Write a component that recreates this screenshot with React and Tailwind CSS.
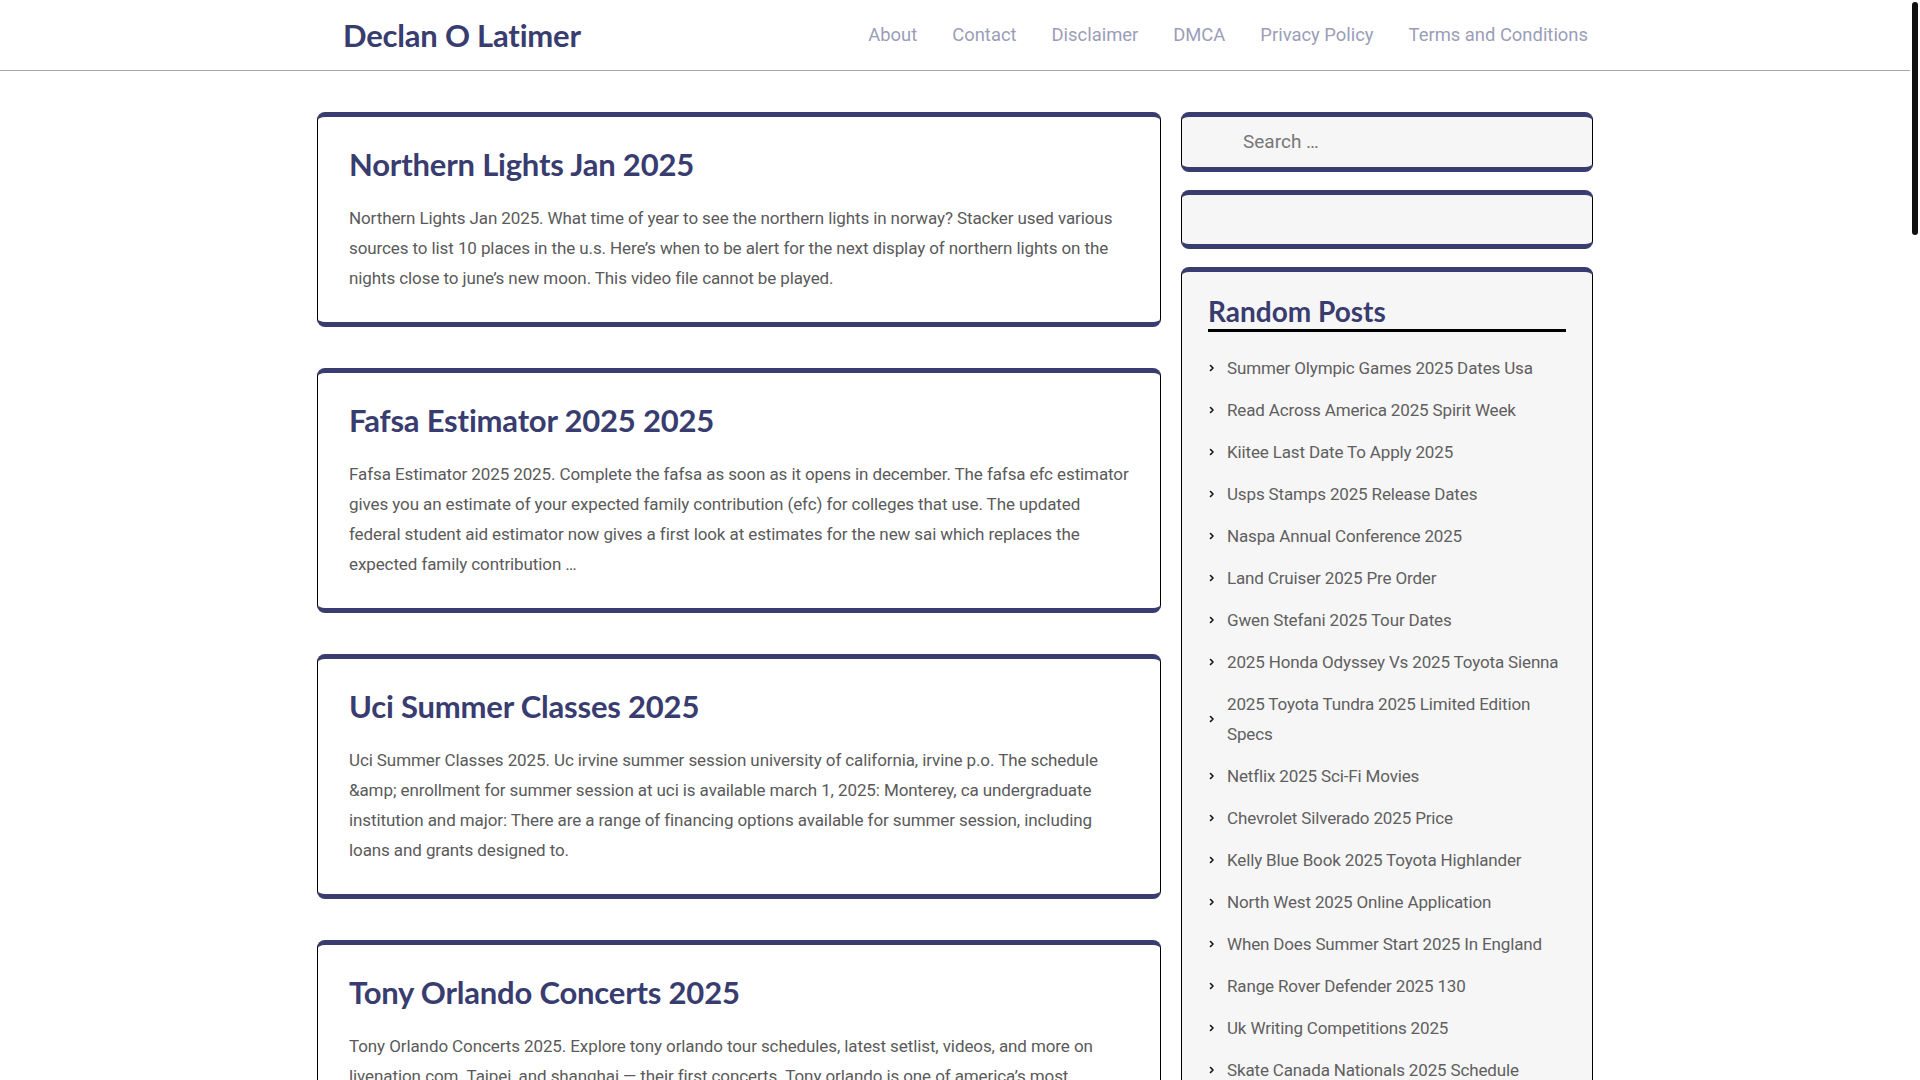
const navLinks = ["About", "Contact", "Disclaimer", "DMCA", "Privacy Policy", "Terms and Conditions"];

const posts = [
  {
    title: "Northern Lights Jan 2025",
    excerpt:
      "Northern Lights Jan 2025. What time of year to see the northern lights in norway? Stacker used various sources to list 10 places in the u.s. Here’s when to be alert for the next display of northern lights on the nights close to june’s new moon. This video file cannot be played.",
  },
  {
    title: "Fafsa Estimator 2025 2025",
    excerpt:
      "Fafsa Estimator 2025 2025. Complete the fafsa as soon as it opens in december. The fafsa efc estimator gives you an estimate of your expected family contribution (efc) for colleges that use. The updated federal student aid estimator now gives a first look at estimates for the new sai which replaces the expected family contribution …",
  },
  {
    title: "Uci Summer Classes 2025",
    excerpt:
      "Uci Summer Classes 2025. Uc irvine summer session university of california, irvine p.o. The schedule &amp; enrollment for summer session at uci is available march 1, 2025: Monterey, ca undergraduate institution and major: There are a range of financing options available for summer session, including loans and grants designed to.",
  },
  {
    title: "Tony Orlando Concerts 2025",
    excerpt:
      "Tony Orlando Concerts 2025. Explore tony orlando tour schedules, latest setlist, videos, and more on livenation.com. Taipei, and shanghai — their first concerts. Tony orlando is one of america’s most celebrated entertainers, and his farewell tour brings the classics to stages across the country …",
  },
  {
    title: "Best Time To Visit Japan 2025",
    excerpt:
      "Best Time To Visit Japan 2025. Spring and autumn are the most popular seasons to travel, with mild weather, cherry blossoms and colourful foliage drawing visitors from around the world. Book early to get the best rates on flights and hotels.",
  },
  {
    title: "Chinese New Year 2025 Animal",
    excerpt:
      "Chinese New Year 2025 Animal. The year of the snake begins on january 29, 2025 and ends on february 16, 2026. People born in the year of the snake are said to be wise, calm and intuitive, with a strong sense of purpose.",
  },
  {
    title: "Nba All Star Game 2025 Location",
    excerpt:
      "Nba All Star Game 2025 Location. The 74th nba all-star game will be played at chase center in san francisco, home of the golden state warriors. The event weekend includes the rising stars game, skills challenge and slam dunk contest.",
  },
  {
    title: "Easter Sunday 2025 Date",
    excerpt:
      "Easter Sunday 2025 Date. Easter falls on april 20, 2025 for both western and orthodox churches. The date is set as the first sunday after the first full moon following the spring equinox …",
  },
  {
    title: "Toyota Camry 2025 Hybrid Mpg",
    excerpt:
      "Toyota Camry 2025 Hybrid Mpg. The redesigned camry is now sold only as a hybrid, with an epa estimated rating of up to 51 mpg combined. All wheel drive is available on every trim level for the first time.",
  },
  {
    title: "Super Bowl 2025 Halftime Show",
    excerpt:
      "Super Bowl 2025 Halftime Show. Kendrick lamar headlines the halftime show at caesars superdome in new orleans, with sza joining as a special guest performer for the big game on february 9, 2025.",
  },
  {
    title: "Tax Brackets 2025 Married Filing Jointly",
    excerpt:
      "Tax Brackets 2025 Married Filing Jointly. The irs has announced inflation adjustments for tax year 2025, raising the standard deduction and widening each of the seven federal income tax brackets …",
  },
  {
    title: "Coachella 2025 Lineup Release Date",
    excerpt:
      "Coachella 2025 Lineup Release Date. The festival returns to the empire polo club in indio, california over two weekends in april. Lady gaga, green day, post malone and travis scott top the bill.",
  },
  {
    title: "Honda Pilot 2025 Trim Levels",
    excerpt:
      "Honda Pilot 2025 Trim Levels. The three row suv is offered in sport, ex-l, touring, trailsport, black edition and elite trims, each powered by a 3.5 liter v6 paired with a ten speed automatic transmission.",
  },
  {
    title: "Mother's Day 2025 Uk Date",
    excerpt:
      "Mother's Day 2025 Uk Date. Mothering sunday in the united kingdom falls on march 30, 2025, three weeks before easter sunday. It is celebrated on the fourth sunday of lent each year …",
  },
  {
    title: "Wimbledon 2025 Ticket Ballot",
    excerpt:
      "Wimbledon 2025 Ticket Ballot. The public ballot is the main way to buy tickets for the championships. Applications open in the autumn and successful applicants are offered seats for a random day and court.",
  },
  {
    title: "Kentucky Derby 2025 Post Time",
    excerpt:
      "Kentucky Derby 2025 Post Time. The 151st running of the kentucky derby takes place at churchill downs in louisville on may 3, 2025, with the post time for the race set for early evening.",
  },
];

const randomPosts = [
  "Summer Olympic Games 2025 Dates Usa",
  "Read Across America 2025 Spirit Week",
  "Kiitee Last Date To Apply 2025",
  "Usps Stamps 2025 Release Dates",
  "Naspa Annual Conference 2025",
  "Land Cruiser 2025 Pre Order",
  "Gwen Stefani 2025 Tour Dates",
  "2025 Honda Odyssey Vs 2025 Toyota Sienna",
  "2025 Toyota Tundra 2025 Limited Edition Specs",
  "Netflix 2025 Sci-Fi Movies",
  "Chevrolet Silverado 2025 Price",
  "Kelly Blue Book 2025 Toyota Highlander",
  "North West 2025 Online Application",
  "When Does Summer Start 2025 In England",
  "Range Rover Defender 2025 130",
  "Uk Writing Competitions 2025",
  "Skate Canada Nationals 2025 Schedule",
  "Mlb Opening Day 2025 Tickets",
  "Nfl Draft 2025 Date And Location",
  "Cma Awards 2025 Nominees",
];

const heading = "font-['Lato','Noto_Sans',sans-serif]";
const body = "font-['Roboto','Noto_Sans',sans-serif]";
const boxBase =
  "rounded-lg border-x border-x-black border-t-[5px] border-b-[5px] border-t-[#383c6f] border-b-[#383c6f]";

function Chevron() {
  return (
    <svg width="8" height="10" viewBox="0 0 8 10" className="shrink-0">
      <path d="M2.5 2.5 L5 5 L2.5 7.5" fill="none" stroke="#111" strokeWidth="1.6" strokeLinecap="round" strokeLinejoin="round" />
    </svg>
  );
}

function PostCard({ post }) {
  return (
    <article className={`${boxBase} bg-white pl-[31px] pr-[26px] pt-[28px] pb-[29px]`}>
      <h2 className={`${heading} text-[31px] leading-[38px] font-bold tracking-[-0.2px] text-[#383c6f]`}>
        {post.title}
      </h2>
      <p className="mt-[20px] text-[17px] leading-[30px] tracking-[-0.1px] text-[#5a5a5a]">{post.excerpt}</p>
    </article>
  );
}

export default function App() {
  return (
    <div className={`${body} w-[1910px] bg-white`}>
      {/* page scroll indicator, as on the original */}
      <div className="fixed right-[2px] top-[2px] h-[233px] w-[6px] rounded-full bg-[#111]" />

      <header className="h-[71px] border-b border-[#a5a5ad]">
        <div className="mx-auto flex h-full w-[1276px] items-center justify-between pl-[26px] pr-[5px]">
          <a className={`${heading} text-[31px] font-bold tracking-[-0.2px] text-[#383c6f]`}>Declan O Latimer</a>
          <nav className="flex items-center gap-[35px]">
            {navLinks.map((l) => (
              <a key={l} className="text-[18.4px] text-[#9b9db8]">
                {l}
              </a>
            ))}
          </nav>
        </div>
      </header>

      <div className="mx-auto flex w-[1276px] items-start gap-[20px] pt-[41px] pb-16">
        <main className="flex w-[844px] flex-col gap-[41px]">
          {posts.map((p) => (
            <PostCard key={p.title} post={p} />
          ))}
        </main>

        <aside className="flex w-[412px] flex-col gap-[18px]">
          <div className={`${boxBase} flex h-[60px] items-center bg-[#f6f6f6] pl-[61px]`}>
            <span className="text-[19px] text-[#777]">Search …</span>
          </div>
          <div className={`${boxBase} h-[59px] bg-[#f6f6f6]`} />
          <div className={`${boxBase} bg-[#f6f6f6] px-[26px] pt-[22px] pb-[24px]`}>
            <h3 className={`${heading} border-b-[3px] border-black pb-[1px] text-[28px] leading-[34px] font-bold text-[#383c6f]`}>
              Random Posts
            </h3>
            <ul className="mt-[15px] flex flex-col">
              {randomPosts.map((t) => (
                <li key={t} className="flex items-center gap-[11px] py-[6px]">
                  <Chevron />
                  <span className="text-[17px] leading-[30px] tracking-[-0.15px] text-[#5f5f5f]">{t}</span>
                </li>
              ))}
            </ul>
          </div>
        </aside>
      </div>
    </div>
  );
}
